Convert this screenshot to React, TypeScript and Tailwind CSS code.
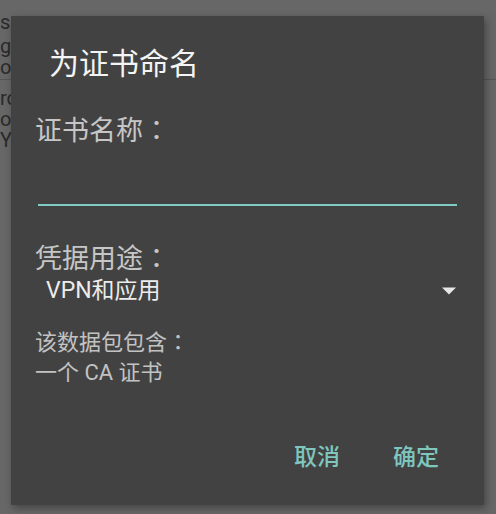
import React from 'react';

const FONT = { fontFamily: 'Roboto, "Noto Sans CJK SC", sans-serif' };
// the colon in the reference sits centred in its cell, as in the TC face
const COLON = { fontFamily: '"Noto Sans CJK TC", sans-serif' };

const BACK_LINES = ['g', 'oo'];
const BACK_LINES_2 = ['rc', 'of', 'Yc'];

function Colon() {
  return <span style={COLON}>：</span>;
}

export default function App() {
  return (
    <div className="relative w-[496px] h-[514px] overflow-hidden bg-[#676767]" style={FONT}>
      {/* page behind the dialog */}
      <div className="pt-[12px] text-[20px] leading-[21px] text-[#2a2a2a]">
        <div className="flex items-start">
          <span className="w-[180px]">s</span>
          <span className="mt-[3px]">c&nbsp;&nbsp;&nbsp;&nbsp;NTERJ000</span>
        </div>
        {BACK_LINES.map((t) => (
          <div key={t} className="w-[11px] overflow-hidden">{t}</div>
        ))}
        <div className="mt-[1px] h-px bg-[#555555]" />
        <div className="pt-[8px]">
          {BACK_LINES_2.map((t) => (
            <div key={t} className="w-[11px] overflow-hidden whitespace-nowrap">{t}</div>
          ))}
        </div>
      </div>

      {/* dialog */}
      <div className="absolute left-[11px] top-[16px] w-[473px] h-[489px] bg-[#424242] shadow-[2px_3px_8px_rgba(0,0,0,0.35)] flex flex-col">
        <div className="pt-[30px] pl-[38px] text-[30px] leading-[36px] text-[#f4f4f4]">为证书命名</div>

        <div className="mt-[31px] pl-[24px] text-[27px] leading-[32px] text-[#c6c6c6]">
          证书名称<Colon />
        </div>
        <div className="mx-[27px] mt-[57px] h-[2px] bg-[#80cbc4]" />

        <div className="mt-[35px] pl-[24px] text-[27px] leading-[32px] text-[#c6c6c6]">
          凭据用途<Colon />
        </div>
        <div className="mt-[2px] pl-[35px] pr-[28px] flex items-center justify-between">
          <span className="text-[23px] leading-[28px] text-[#ececec]">VPN和应用</span>
          <svg width="16" height="8" viewBox="0 0 16 8" className="mr-[-1px]">
            <path d="M1 0.5 L15 0.5 L8 7.5 Z" fill="#e6e6e6" />
          </svg>
        </div>

        <div className="mt-[20px] pl-[24px] text-[22px] leading-[30px] text-[#c2c2c2]">
          <div>
            该数据包包含<Colon />
          </div>
          <div>一个 CA 证书</div>
        </div>

        <div className="mt-[56px] pr-[45px] flex justify-end gap-[53px] text-[23px] leading-[28px] font-medium text-[#7ec6be]">
          <button>取消</button>
          <button>确定</button>
        </div>
      </div>
    </div>
  );
}
